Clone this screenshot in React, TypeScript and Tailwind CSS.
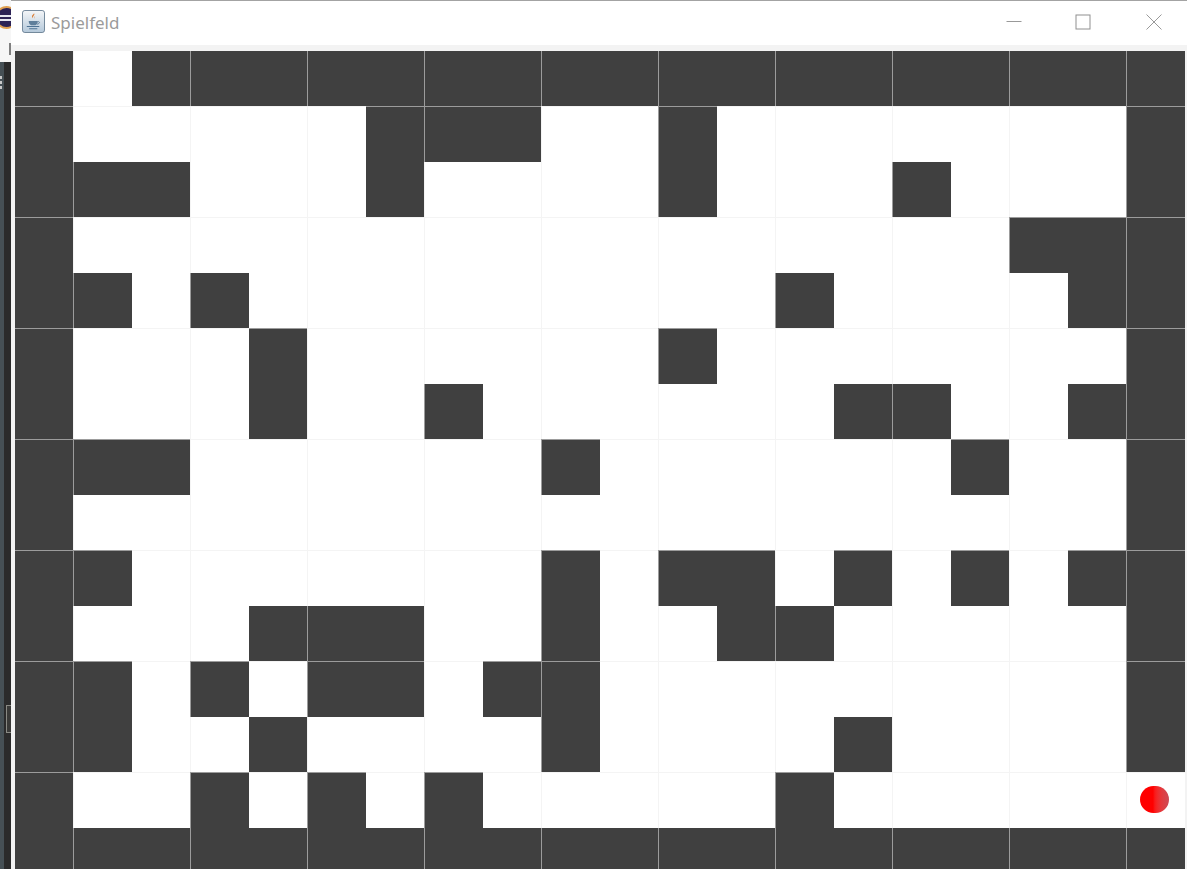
import React from 'react';

// one string per row, # = wall, . = free, o = ball
const board = [
  '#.##################',
  '#.....###..#.......#',
  '###...#....#...#...#',
  '#................###',
  '##.#.........#....##',
  '#...#......#.......#',
  '#...#..#......##..##',
  '###......#......#..#',
  '#..................#',
  '##.......#.##.#.#.##',
  '#...###..#..##.....#',
  '##.#.##.##.........#',
  '##..#....#....#....#',
  '#..#.#.#.....#.....o',
  '####################',
];

function JavaIcon() {
  return (
    <svg width="23" height="23" viewBox="0 0 24 24" className="mb-[3px] shrink-0">
      <defs>
        <linearGradient id="javaBg" x1="0" y1="0" x2="0" y2="1">
          <stop offset="0" stopColor="#f4f6f8" />
          <stop offset="1" stopColor="#b4c8da" />
        </linearGradient>
      </defs>
      <rect x="0.5" y="0.5" width="23" height="23" rx="2.5" fill="url(#javaBg)" stroke="#6d8397" />
      <path d="M12.5 3.500c1.600 1.800-1.800 3-1 5.200-1.800-1.600-1-3 .1-3.900.5-.4.9-.8.9-1.300z" fill="#d9772b" />
      <path d="M14.500 6c-1.300.8-2 1.600-1.200 3-.9-.7-1.200-2 1.200-3z" fill="#d9772b" />
      <path d="M7 11.500h9.500c0 2.600-1.400 4-2.600 4.400H9.600C8.400 15.500 7 14.100 7 11.500z" fill="#5f7f9b" />
      <path d="M16.500 12.200c2.200-.5 2.800 1.800-.8 2.700" fill="none" stroke="#5f7f9b" />
      <path d="M5 17.300h13M7.500 19.500h8.500" stroke="#4e7394" strokeWidth="1.100" />
    </svg>
  );
}

function WindowButton({ children }: { children: React.ReactNode }) {
  return <div className="flex h-full w-[65px] items-center justify-center">{children}</div>;
}

export default function App() {
  return (
    <div className="flex h-[869px] w-[1187px] overflow-hidden bg-white">
      {/* bit of the IDE still showing behind the window */}
      <div className="flex w-[11px] shrink-0 flex-col">
        <div className="relative h-[62px] overflow-hidden bg-[#f6f6f6]">
          <div className="absolute left-[-3px] top-[8px] flex h-[19px] w-[19px] flex-col justify-center gap-[2px] rounded-full bg-[#2c2255] ring-2 ring-[#e0a050]">
            <div className="h-[2px] bg-[#e6e6f0]" />
            <div className="h-[2px] bg-[#e6e6f0]" />
          </div>
          <div className="absolute right-0 top-[43px] h-[12px] w-[2px] bg-[#808080]" />
        </div>
        <div className="flex min-h-0 flex-1">
          <div className="flex w-[4px] flex-col items-start gap-[2px] bg-[#465055] pt-[14px]">
            <div className="h-[3px] w-[2px] bg-[#c8c8c8]" />
            <div className="h-[3px] w-[2px] bg-[#c8c8c8]" />
            <div className="h-[3px] w-[2px] bg-[#c8c8c8]" />
          </div>
          <div className="relative flex-1 bg-[#2b2b2b]">
            <div className="absolute left-[2px] top-[643px] h-[28px] w-[5px] border border-r-0 border-[#8a8a84] bg-[#3a3a38]" />
          </div>
        </div>
      </div>

      <div className="flex min-w-0 flex-1 flex-col border-t border-[#a3a3a3] bg-[#f3f3f3]">
        <div className="flex h-[44px] shrink-0 items-center bg-white pl-[11px] font-['Noto_Sans',sans-serif]">
          <JavaIcon />
          <span className="ml-[6px] text-[17px] text-[#9b9b9b]">Spielfeld</span>
          <div className="ml-auto flex h-full gap-[5px] pb-[2px] pr-px">
            <WindowButton>
              <svg width="16" height="16" viewBox="0 0 16 16" stroke="#999999" fill="none">
                <path d="M0.500 7.500h15" />
              </svg>
            </WindowButton>
            <WindowButton>
              <svg width="16" height="16" viewBox="0 0 16 16" stroke="#909090" fill="none" className="-translate-x-px">
                <rect x="1" y="1" width="14" height="14" />
              </svg>
            </WindowButton>
            <WindowButton>
              <svg width="16" height="16" viewBox="0 0 16 16" stroke="#999999" fill="none">
                <path d="M0.500 0.500l15 15M15.500 0.500l-15 15" />
              </svg>
            </WindowButton>
          </div>
        </div>

        <div className="ml-[3.5px] mt-[5.5px] grid grid-cols-[repeat(20,58.5px)] auto-rows-[55.5px]">
          {board.flatMap((row, r) =>
            row.split('').map((cell, c) => (
              <div
                key={`${r}-${c}`}
                className={`flex items-center justify-center ${c % 2 === 1 ? 'border-l' : ''} ${r % 2 === 1 ? 'border-t' : ''} ${
                  cell === '#' ? 'border-[#9c9c9c] bg-[#404040]' : 'border-[#f4f4f4] bg-white'
                }`}
              >
                {cell === 'o' && (
                  <div className="h-[27px] w-[29px] -translate-x-px -translate-y-px rounded-full bg-linear-to-r from-[#ff0000] from-45% to-[#cc4a55]" />
                )}
              </div>
            )),
          )}
        </div>
      </div>
    </div>
  );
}
